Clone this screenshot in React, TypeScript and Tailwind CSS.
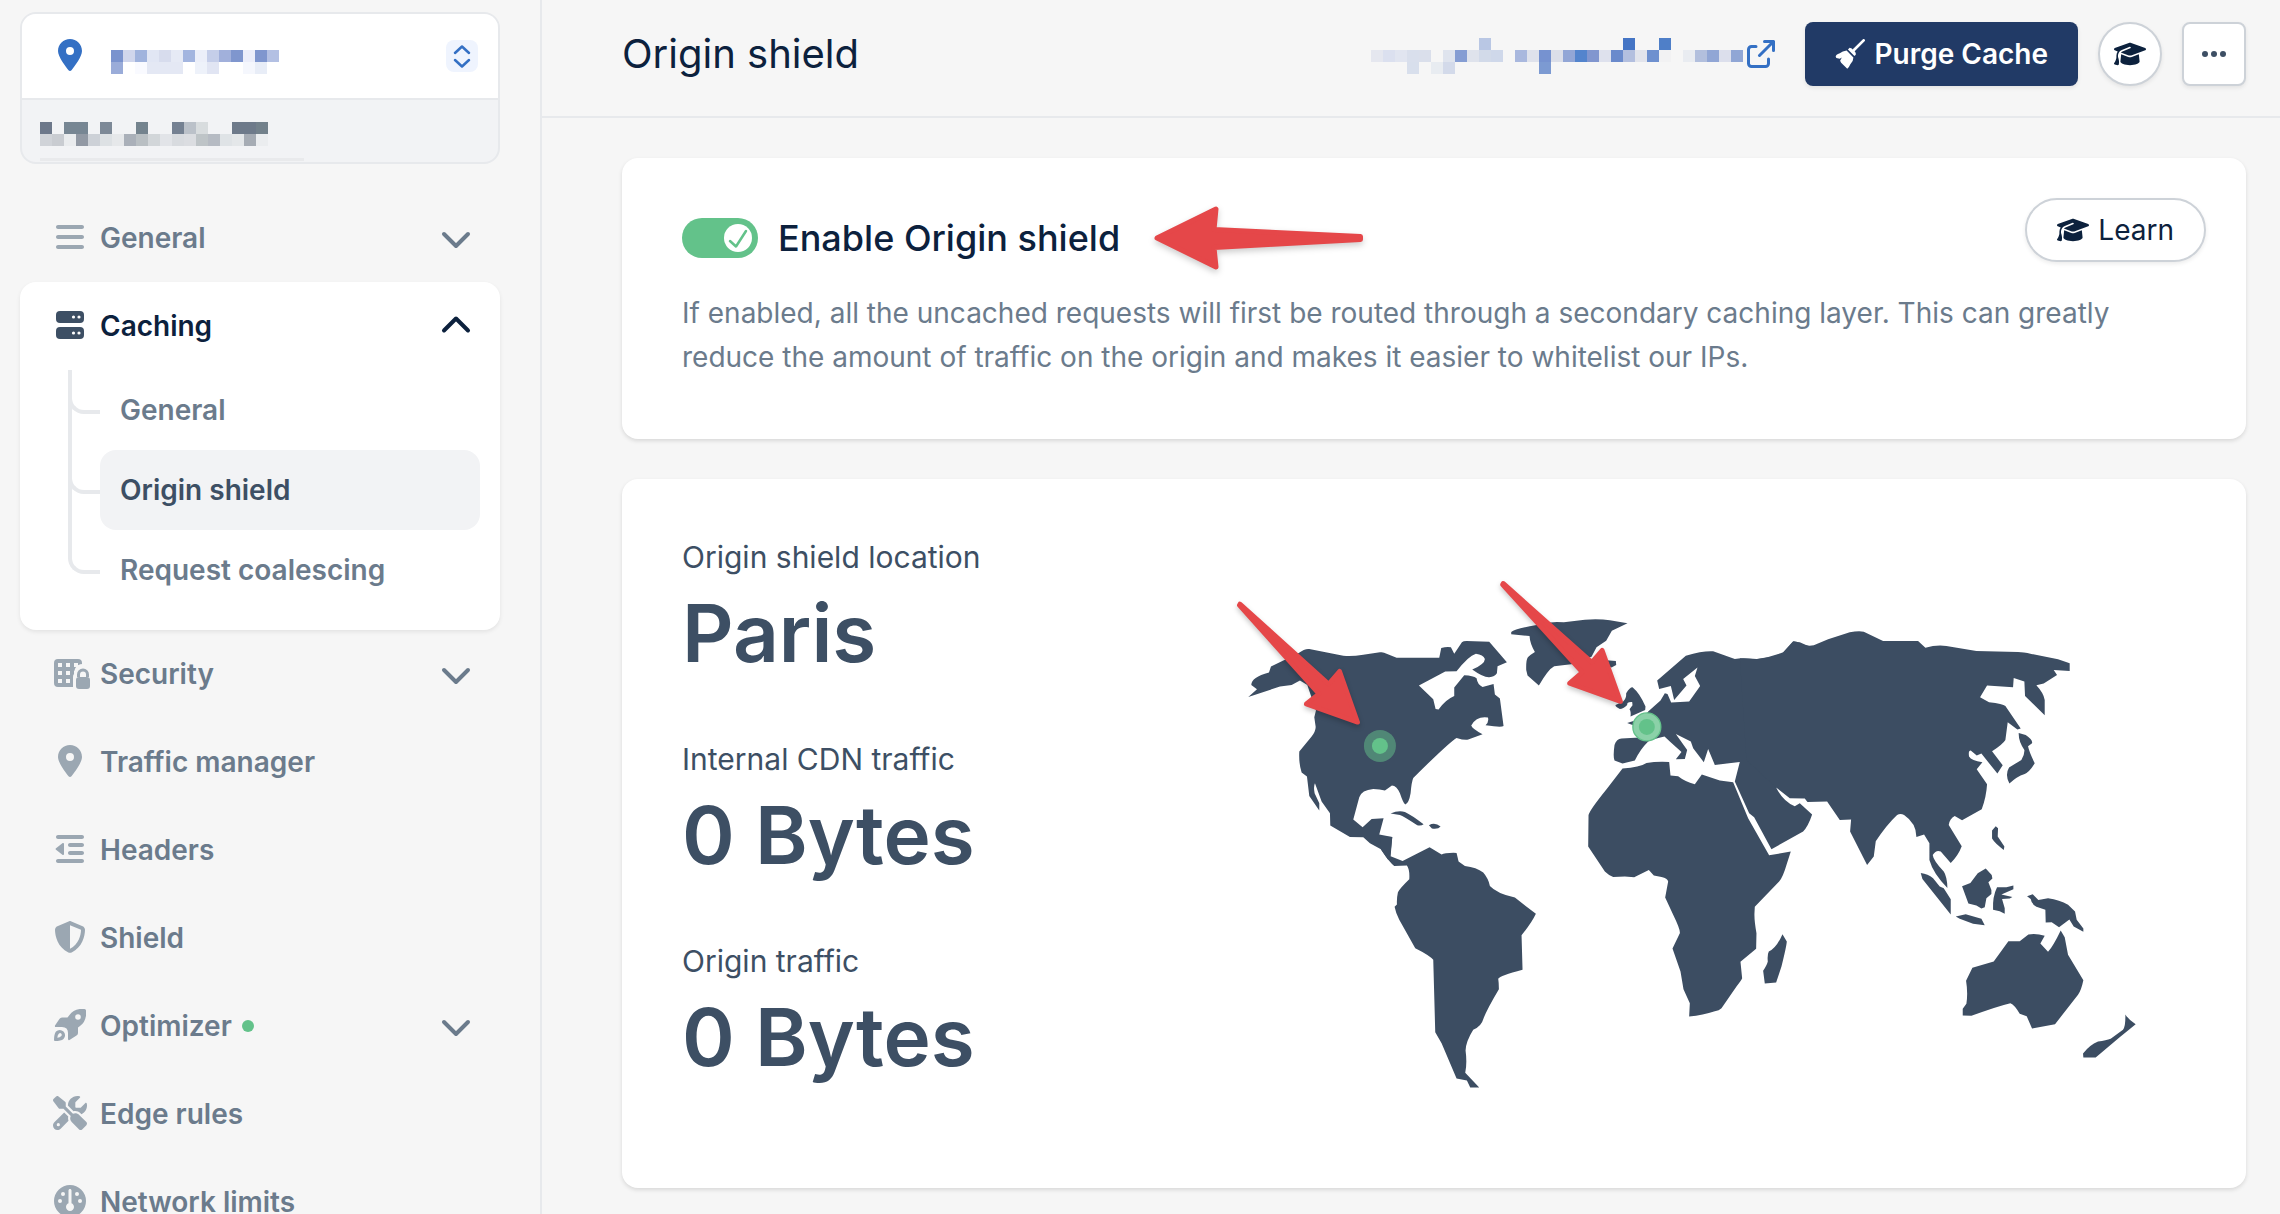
import type { ReactNode } from 'react';
import {
  FaBars, FaGauge, FaGraduationCap, FaLocationDot, FaOutdent, FaScrewdriverWrench, FaShieldHalved,
} from 'react-icons/fa6';

// '' leaves a cell empty
const SITE_MOSAIC = [
  ['#7a93ce', '#d0d6ec', '#a0b3dd', '#e1e6f4', '#d7dced', '#e6eaf5', '#a3b5df', '#eceff9', '#c5cee9', '#a1b0db', '#7f96ce', '#eceefa', '#7f96ce', '#b3c0e3'],
  ['#9aacd9', '', '#f9faff', '#e4e8f4', '#e4e8f4', '#e4e8f4', '', '#eef2fa', '#e1e5f3', '', '', '#f5f7fd', '#e8edf7', ''],
];

const ACCOUNT_MOSAIC = [
  ['#6d788a', '', '#778693', '#778693', '', '#7d8997', '', '', '#74838e', '', '', '#758192', '#bbc1c9', '#d8dcde', '', '', '#6e7a8a', '#6e7a8a', '#73818b'],
  ['#d0d3d8', '#c9ccd1', '#eaecee', '#9299a4', '#cdd1d7', '#dde1e4', '#e6e8ea', '#aab0b9', '#b9bfc3', '#d2d6d9', '#e2e4e8', '#d8dbdf', '#dbdde1', '#bec4c7', '#b6bbc3', '#dfe3e6', '#e4e7e9', '#a6acb4', '#ebedef'],
];

const HOST_MOSAIC = [
  ['', '', '', '', '', '', '', '', '', '#b9c7e4', '', '', '', '', '', '', '', '', '', '', '', '#4575c5', '', '', '#4f7fc8', '', '', '', '', '', ''],
  ['#e5e7ef', '#dbe0ef', '#e1e5f0', '#d9dfec', '#dadfeb', '', '#dfe4ee', '#859dd3', '#dfe3ec', '#d2dae9', '#cfd8ea', '', '#a9b8de', '#dfe2ec', '#7692d0', '#dcdfe9', '#92a6d6', '#5384cd', '#8196cf', '#dee1ed', '#6a8acc', '#b3bfdf', '#e2e4ec', '#6e90cf', '#f2f2f3', '', '#e9ecf1', '#b2bfdd', '#91a6d5', '#dcdfec', '#90a6d5'],
  ['', '', '', '#d8dfec', '', '#e8ecf1', '#d3daea', '', '', '', '', '', '', '', '#7c9ad2', '', '', '', '', '', '', '', '', '', '', '', '', '', '', '', ''],
];

function Mosaic({ rows }: { rows: string[][] }) {
  return (
    <span aria-hidden className="block">
      {rows.map((row, i) => (
        <span key={i} className="flex">
          {row.map((c, j) => <span key={j} className="size-3" style={{ backgroundColor: c || 'transparent' }} />)}
        </span>
      ))}
    </span>
  );
}

function Chevron({ up }: { up?: boolean }) {
  return (
    <svg viewBox="0 0 32 32" className="size-8" fill="none" stroke="currentColor" strokeWidth="4" strokeLinecap="round" strokeLinejoin="round">
      <path d={up ? 'M4 21.5L16 9.5L28 21.5' : 'M4 13L16 25L28 13'} />
    </svg>
  );
}

function ServerIcon() {
  return (
    <svg viewBox="0 0 32 32" className="size-8" fill="currentColor">
      <rect x="2" y="2" width="28" height="12" rx="4" />
      <rect x="2" y="18" width="28" height="12" rx="4" />
      <g fill="#fff">
        <circle cx="19.5" cy="8" r="1.6" /><circle cx="25" cy="8" r="1.6" />
        <circle cx="19.5" cy="24" r="1.6" /><circle cx="25" cy="24" r="1.6" />
      </g>
    </svg>
  );
}

function GridLockIcon() {
  return (
    <svg viewBox="0 0 40 32" className="h-8 w-10" fill="currentColor">
      <path fillRule="evenodd" d="M8 2h20a4 4 0 0 1 4 4v20a4 4 0 0 1-4 4H8a4 4 0 0 1-4-4V6a4 4 0 0 1 4-4zM8 6v4h4V6zM16 6v4h4V6zM24 6v4h4V6zM8 14v4h4v-4zM16 14v4h4v-4zM24 14v4h4v-4zM8 22v4h4v-4zM16 22v4h4v-4zM24 22v4h4v-4z" />
      <path fill="#f6f6f6" d="M23 32V20a4 4 0 0 1 1.500-3.500V17a8 8 0 0 1 15.500-4V32z" />
      <path d="M27 20v-2.500a6 6 0 0 1 12 0V20zM30 20h6v-2.500a3 3 0 0 0-6 0z" fillRule="evenodd" />
      <rect x="26" y="20" width="14" height="12" rx="3" />
    </svg>
  );
}

function RocketIcon() {
  return (
    <svg viewBox="0 0 32 32" className="size-8" fill="currentColor" fillRule="evenodd">
      <path d="M32 1.500Q32 0 30.500 0Q20 -1 15.500 6L13.500 8.500H8Q6.300 8.500 5.400 10L1 16.500Q.5 18 2 18H8Q14 18 14 24V30Q14 31.500 15.500 31L22.500 26.500Q24 25.500 24 24V18.500L26 17Q33 12 32 1.500ZM24 5.200A2.800 2.800 0 1 1 24 10.800A2.800 2.800 0 1 1 24 5.200Z" />
      <path d="M0 31Q0 25 2 22.500A5.200 5.200 0 0 1 9.500 30Q7 32 1 32Q0 32 0 31ZM5 24.500Q3.500 26 3.300 28.700Q6 28.500 7.300 27A1.700 1.700 0 0 0 5 24.500Z" />
    </svg>
  );
}

function BroomIcon() {
  return (
    <svg viewBox="0 0 88 88" className="size-[30px]" fill="currentColor">
      <path d="M84 4L52 36" stroke="currentColor" strokeWidth="8" strokeLinecap="round" />
      <path d="M38 31L43 26Q50 26 54 34Q62 38 61 46L57 50Z" />
      <path d="M34 34Q22 36 14 42Q2 46 2 52L4 56L14 58L20 54L15 64L18 70L36 87Q42 82 45 74Q54 66 54 54Z" />
    </svg>
  );
}

function ExternalIcon() {
  return (
    <svg viewBox="0 0 28 28" className="size-7" fill="none" stroke="currentColor" strokeWidth="3" strokeLinecap="round" strokeLinejoin="round">
      <path d="M9 6.500H4.500a3 3 0 0 0-3 3v14a3 3 0 0 0 3 3h14a3 3 0 0 0 3-3V19M17.500 1.500h9v9M26.500 1.500L12.500 15.500" />
    </svg>
  );
}

function NavRow({ icon, label, open, dot, chevron }: { icon: ReactNode; label: string; open?: boolean; dot?: boolean; chevron?: boolean }) {
  const row = (
    <>
      <span className={`flex w-10 shrink-0 justify-center pb-0.5 ${open ? 'text-[#3d4f64]' : 'text-[#9ba7b2]'}`}>{icon}</span>
      <span>{label}</span>
      {dot && <span className="size-3 rounded-full bg-[#63c28a]" />}
      {chevron && <span className="ml-auto pb-0.5"><Chevron up={open} /></span>}
    </>
  );
  const cls = `flex h-[88px] w-full items-center gap-2.5 pr-7 pl-[30px] text-left text-[28px] leading-6 font-semibold ${open ? 'text-[#0c213d]' : 'text-[#6b7b8c]'}`;
  return chevron
    ? <button type="button" aria-expanded={!!open} className={cls}>{row}</button>
    : <a href="#" className={cls}>{row}</a>;
}

const CACHING = [
  { label: 'General' },
  { label: 'Origin shield', active: true },
  { label: 'Request coalescing' },
];

function Sidebar() {
  return (
    <aside className="w-[542px] shrink-0 overflow-hidden border-r-2 border-[#e7e9ec] pt-3 pr-10 pl-5">
      <div className="mb-[30px] overflow-hidden rounded-2xl border-2 border-[#e7e9ec] bg-[#f2f3f5]">
        <button type="button" aria-label="Switch pull zone" className="flex h-[86px] w-full items-center border-b-2 border-[#e7e9ec] bg-white pr-5 pl-8 text-[#3470c4]">
          <span className="flex w-8 justify-center pb-0.5"><FaLocationDot size={32} /></span>
          <span className="mt-3 ml-[25px]"><Mosaic rows={SITE_MOSAIC} /></span>
          <span className="ml-auto flex size-8 items-center justify-center rounded-lg bg-[#eff4fe]">
            <svg viewBox="0 0 32 32" className="size-8" fill="none" stroke="currentColor" strokeWidth="2.500" strokeLinecap="round" strokeLinejoin="round">
              <path d="M9 13L16 6.500L23 13M9 20L16 26.500L23 20" />
            </svg>
          </span>
        </button>
        <div className="flex h-[62px] flex-col justify-between pt-[22px] pb-px pl-[18px]">
          <Mosaic rows={ACCOUNT_MOSAIC} />
          <span className="h-[3px] w-[264px] bg-[#e9eaec]" />
        </div>
      </div>
      <nav>
        <NavRow icon={<FaBars size={32} />} label="General" chevron />
        <div className="rounded-2xl bg-white pb-5 shadow-[0_2px_4px_rgba(0,0,0,0.08)]">
          <NavRow icon={<ServerIcon />} label="Caching" open chevron />
          <ul className="pr-5 pl-12">
            {CACHING.map((item, i) => (
              <li key={item.label} className="relative flex h-20">
                {i < CACHING.length - 1 && <span className="absolute inset-y-0 left-0 w-1 bg-[#e7e9ec]" />}
                <span className="h-11 w-8 shrink-0 rounded-bl-2xl border-b-4 border-l-4 border-[#e7e9ec]" />
                <a href="#" className={`flex grow items-center rounded-2xl pl-5 text-[28px] font-semibold ${item.active ? 'bg-[#f2f3f5] text-[#3d4f64]' : 'text-[#6b7b8c]'}`}>{item.label}</a>
              </li>
            ))}
          </ul>
        </div>
        <NavRow icon={<GridLockIcon />} label="Security" chevron />
        <NavRow icon={<FaLocationDot size={32} />} label="Traffic manager" />
        <NavRow icon={<FaOutdent size={32} />} label="Headers" />
        <NavRow icon={<FaShieldHalved size={32} />} label="Shield" />
        <NavRow icon={<RocketIcon />} label="Optimizer" dot chevron />
        <NavRow icon={<FaScrewdriverWrench size={34} />} label="Edge rules" />
        <NavRow icon={<FaGauge size={32} />} label="Network limits" />
      </nav>
    </aside>
  );
}

function Header() {
  return (
    <header className="flex items-start border-b-2 border-[#e7e9ec] pt-[22px] pr-[34px] pb-[30px] pl-20">
      <h1 className="text-[40px] leading-[64px] text-[#0c213d]">Origin shield</h1>
      <a href="#" aria-label="Open hostname" className="ml-auto flex h-16 items-center gap-1 text-[#3470c4]">
        <span className="pt-1"><Mosaic rows={HOST_MOSAIC} /></span>
        <ExternalIcon />
      </a>
      <button type="button" className="ml-[30px] flex h-16 items-center gap-[9px] rounded-lg bg-[#213a66] px-[30px] text-[28px] font-semibold text-white shadow-[0_2px_4px_rgba(0,0,0,0.08)]">
        <BroomIcon />
        Purge Cache
      </button>
      <button type="button" aria-label="Learn" className="ml-5 flex size-16 items-center justify-center rounded-full border-2 border-[#cdd2d8] bg-white text-[#0c213d] shadow-[0_2px_4px_rgba(0,0,0,0.08)]">
        <FaGraduationCap size={32} />
      </button>
      <button type="button" aria-label="More" className="ml-5 flex size-16 items-center justify-center rounded-lg border-2 border-[#cdd2d8] bg-white text-[#3d4f64] shadow-[0_2px_4px_rgba(0,0,0,0.08)]">
        <svg viewBox="0 0 24 6" className="h-1.5 w-6" fill="currentColor"><circle cx="3" cy="3" r="3" /><circle cx="12" cy="3" r="3" /><circle cx="21" cy="3" r="3" /></svg>
      </button>
    </header>
  );
}

function EnableCard() {
  return (
    <section className="rounded-2xl bg-white pt-10 pr-10 pb-[60px] pl-[60px] shadow-[0_2px_4px_rgba(0,0,0,0.12)]">
      <div className="flex items-start justify-between">
        <div className="relative flex h-10 items-center gap-5 pt-10">
          <span className="relative flex">
            <input id="enable-shield" type="checkbox" defaultChecked className="h-10 w-[76px] appearance-none rounded-full bg-[#63c28a]" />
            <span className="pointer-events-none absolute top-1.5 right-1.5 flex size-7 items-center justify-center rounded-full bg-white text-[#63c28a]">
              <svg viewBox="0 0 28 28" className="size-7" fill="none" stroke="currentColor" strokeWidth="2.500" strokeLinecap="round" strokeLinejoin="round"><path d="M6 17L12 22.500L22 7" /></svg>
            </span>
          </span>
          <label htmlFor="enable-shield" className="text-[36px] leading-[42px] font-medium text-[#0c213d]">Enable Origin shield</label>
          <svg viewBox="0 0 212 72" className="absolute top-2 left-full ml-8 h-[72px] w-[212px] max-w-none" fill="#e54749" stroke="#e54749" strokeWidth="5" strokeLinejoin="round" filter="drop-shadow(0 3px 3px rgba(0,0,0,.2))">
            <path d="M5 32L64 3L62 23.500L208.500 30.500L208.500 33.500L62 41.500L64 61Z" />
          </svg>
        </div>
        <button type="button" className="flex h-16 items-center gap-[9px] rounded-full border-2 border-[#cdd2d8] bg-white px-[30px] text-[28px] text-[#0c213d] shadow-[0_2px_4px_rgba(0,0,0,0.08)]">
          <FaGraduationCap size={32} />
          Learn
        </button>
      </div>
      <p className="mt-[29px] pr-5 text-[28px] leading-[44px] text-[#6b7b8c]">
        If enabled, all the uncached requests will first be routed through a secondary caching layer. This can greatly reduce the amount of traffic on the origin and makes it easier to whitelist our IPs.
      </p>
    </section>
  );
}

function WorldMap() {
  return (
    <svg viewBox="0 0 3009 1767" className="w-2/3 shrink-0" fill="#3c4d62" role="img" aria-label="Shield locations">
      {/* North America */}
      <g transform="translate(111 63)">
        <path d="M85 411L111 388L94 375Q94 352 147 338L153 320L235 280Q255 265 268 267L370 287Q395 290 430 284L480 277Q490 275 500 281L530 293L658 293L664 264Q680 260 693 262L703 281L726 247Q730 243 740 243L808 245L861 307L833 319L831 340Q825 350 808 352Q790 353 757 329Q795 312 795 297Q790 284 768 281Q745 288 710 334L676 335L597 377L640 418L647 447L656 449Q675 420 703 408L703 383L733 346Q760 347 770 355Q773 375 788 381L821 372L825 404L840 416L851 498Q845 503 797 496Q808 485 804 473Q770 468 754 497Q758 508 788 523L745 539Q735 542 710 534Q690 545 580 654Q575 665 572 700Q567 730 556 734Q550 730 540 700Q530 678 516 677L495 692Q480 687 460 687Q425 690 418 712L400 779L428 802L455 777L491 775L478 824L517 831L511 888L505 900L483 868L450 850L430 832L390 831L331 797L330 760L305 725L285 670Q280 680 284 700L298 730L298 752L268 708L261 650L245 638Q236 610 238 575L275 530Q288 512 287 500L283 472L288 452L262 375L240 362L215 375L180 380Z" />
        <path d="M512 761Q535 750 555 756Q575 765 611 793Q605 798 592 796Q550 768 540 765ZM627 796Q645 786 662 800Q655 809 636 806Z" />
      </g>
      {/* South America, Madagascar */}
      <g transform="translate(531 723)">
        <path d="M97 171L92 229L128 243L209 202L245 224Q255 218 290 219L296 245L315 258Q350 262 370 278Q385 295 390 318Q410 340 465 353L528 402Q515 430 485 466L488 570Q420 588 415 597Q417 610 417 628Q380 690 370 718Q365 738 340 750Q318 785 317 812Q322 850 316 879L358 923L331 923L321 902L290 896L245 790L226 757L220 540Q210 527 166 505L118 420Q108 402 104 381L111 374Q110 355 114 337Q120 325 148 298Q150 270 141 257L103 258Q90 250 63 209L60 170Z" />
        <path d="M1268 463L1281 485Q1280 500 1265 560L1249 608L1215 611L1210 573Q1222 555 1224 545Q1222 525 1227 515Q1250 505 1268 463Z" />
      </g>
      {/* Greenland, Iceland, Britain, Europe, Africa */}
      <g transform="translate(771 63)">
        <path d="M214 216Q225 207 290 195Q330 183 372 187L435 179Q480 176 510 181L563 190L516 212L499 242L470 262L455 290L400 312L343 319Q325 328 297 377L263 347L259 330Q258 300 264 292Q270 285 285 276Q270 250 269 228L214 223Z" />
        <path d="M490 300L528 303L529 315L515 323L495 312Z" />
        <path d="M559 400Q570 382 578 382Q600 400 617 440L616 450L572 470Q574 455 569 448L578 436L577 426Q560 425 562 435Q550 447 540 447Q525 440 527 435L550 425Q560 415 559 400ZM562 489L590 480L590 500Z" />
        <path d="M652 362L738 287Q790 272 820 274L885 297Q905 293 950 297Q1000 293 1030 278L1060 245L1080 247L1200 300L1200 690L1100 700L1009 683Q1030 725 1065 739L1080 730L1117 764Q1105 800 1090 815L995 868L943 772L928 760L885 665L900 606L825 615L805 567L792 607L760 565L753 545L708 522L742 570L735 597L708 598L725 576L690 545L674 530Q640 537 625 545Q600 570 585 602L548 611L524 602Q519 590 524 555Q530 537 545 536L600 533L590 500L625 455L662 422L675 400L683 402L694 428L748 425L781 378L765 348L773 323L730 357L740 377L703 420L693 378L658 387Z" />
        <path d="M548 626Q600 622 620 609Q650 604 688 606L692 647L715 649Q735 665 765 673L786 644L840 662L880 667L925 775L988 886L1053 875L1040 915Q1030 950 1018 965L945 1041L944 1060Q943 1080 950 1120L949 1167L902 1206L907 1255Q905 1260 890 1280L845 1345Q838 1352 825 1354Q790 1366 748 1370L750 1330L731 1288L722 1235L698 1166L720 1120Q722 1110 700 1065L676 1013L685 965Q683 955 665 951L642 947L627 930L583 952L555 950L520 951Q508 948 495 935L445 860L446 765Q450 750 500 688Z" />
      </g>
      {/* Asia, Japan, Philippines */}
      <g transform="translate(1671 183)">
        <path d="M0 175L50 178Q90 172 130 157L160 124Q168 122 180 130Q200 140 222 136L265 118L330 97Q355 92 372 95L430 123L535 123L557 143Q590 134 620 138L710 153L835 156Q850 156 875 162L955 178L990 190V213L942 210L952 225L912 251L890 256Q912 280 915 300L915 346L856 288L854 245L822 234L820 262L742 257L721 292L748 307Q790 312 797 318L843 386L833 389L804 367L797 420Q790 432 757 454L789 496L773 521L725 461L711 467L693 452Q685 452 688 470Q695 483 728 487L711 508L742 553Q740 590 726 628L667 661L645 648Q630 655 627 675L666 739Q655 768 633 789L603 755Q590 748 579 765Q580 780 612 815Q622 830 623 864Q580 820 569 780L569 730L553 704L530 711Q530 670 493 645Q482 640 472 645Q440 675 408 724L402 770L382 795L331 695L334 659L300 660L262 605L203 606L195 596L150 595L109 563L20 480Z" />
        <path d="M837 399L858 405Q880 420 877 430L865 439Q868 455 885 490Q870 515 855 522Q830 530 809 551Q795 525 808 503L845 480Q855 465 854 450Q836 425 837 399ZM757 692L768 679L775 685L774 710L794 740L792 750Q765 730 757 716Z" />
      </g>
      {/* Indonesia, Australia, New Zealand */}
      <g transform="translate(1971 783)">
        <path d="M243 219Q265 222 280 235L300 260L312 265L333 298L333 344L248 237ZM348 350L378 343L425 357L435 376L400 372L360 357Z" />
        <path d="M367 259L392 249L414 220L438 206L456 225L458 236L446 247L455 270L455 282L440 295L435 322L425 326L410 317L386 311Z" />
        <path d="M472 262L500 262L521 257V268L485 284L518 291L510 296L487 297L495 325V342L480 334L460 330Q458 290 472 262Z" />
        <path d="M562 289L579 283L596 300L625 295Q660 300 685 315L706 335L711 360L731 386V396L702 380L689 359L658 382L636 367L618 368L617 330L590 321Q575 312 573 297Z" />
        <path d="M369 627L380 612Q385 580 379 543L398 504L462 485L506 424L540 424L566 404Q590 400 615 408L602 431L625 456Q640 440 663 392L675 412L685 465L731 541Q725 570 715 585L646 673L577 686L561 649L540 642Q525 615 512 610Q470 620 395 648L369 647Z" />
        <path d="M857 644Q865 658 888 673L840 712L768 773H731L730 761Q750 735 775 725Q800 722 813 717L850 690Q858 680 857 644Z" />
      </g>
      <g fill="#63c28a">
        <circle cx="591" cy="621" r="48" fillOpacity="0.500" />
        <circle cx="591" cy="621" r="24" />
        <circle cx="1392" cy="564" r="42" fill="#8bd1a8" stroke="#63c28a" strokeWidth="4" />
        <circle cx="1392" cy="564" r="24" />
      </g>
      <g fill="#e54749" stroke="#e54749" strokeWidth="14" strokeLinejoin="round" filter="drop-shadow(0 8px 8px rgba(0,0,0,.22))">
        <path d="M171 195L437 435L470 397L524 550L370 495L408 465L169 199Z" />
        <path d="M961 133L1227 370L1258 334L1313 488L1160 433L1198 400L959 137Z" />
      </g>
    </svg>
  );
}

const STATS = [
  { label: 'Origin shield location', value: 'Paris' },
  { label: 'Internal CDN traffic', value: '0 Bytes' },
  { label: 'Origin traffic', value: '0 Bytes' },
];

function LocationCard() {
  return (
    <section className="flex rounded-2xl bg-white p-[60px] shadow-[0_2px_4px_rgba(0,0,0,0.12)]">
      <dl className="flex w-1/3 shrink-0 flex-col gap-[60px] text-[#3d4f64]">
        {STATS.map((s) => (
          <div key={s.label}>
            <dt className="mb-2.5 text-[30px] leading-9">{s.label}</dt>
            <dd className="text-[80px] leading-[96px] font-semibold whitespace-nowrap">{s.value}</dd>
          </div>
        ))}
      </dl>
      <WorldMap />
    </section>
  );
}

export default function App() {
  return (
    <div className="flex h-screen overflow-hidden bg-[#f6f6f6] font-['Inter',sans-serif]">
      <Sidebar />
      <main className="min-w-0 grow overflow-hidden">
        <Header />
        <div className="flex flex-col gap-10 pt-10 pr-[34px] pb-10 pl-20">
          <EnableCard />
          <LocationCard />
        </div>
      </main>
    </div>
  );
}
